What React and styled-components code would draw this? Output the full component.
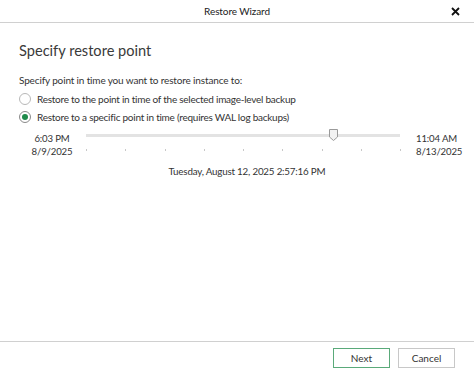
import React from "react";
import styled, { createGlobalStyle } from "styled-components";

const Global = createGlobalStyle`
  html, body { margin: 0; padding: 0; background: #fff; }
  body { font-family: "Lato", "Noto Sans", sans-serif; color: #333; }
  * { box-sizing: border-box; }
`;

const Window = styled.div`
  width: 474px;
  height: 374px;
  display: flex;
  flex-direction: column;
  background: #fff;
`;

const TitleBar = styled.div`
  height: 23px;
  flex: none;
  display: flex;
  align-items: center;
  justify-content: center;
  position: relative;
  border-bottom: 1px solid #d0d0d0;
  font-size: 10px;
  letter-spacing: -0.1px;
  color: #222;
`;

const Close = styled.div`
  position: absolute;
  right: 13px;
  top: 6px;
  width: 11px;
  height: 11px;
  display: flex;
`;

const Body = styled.div`
  flex: 1;
  padding: 18px 19px 0 19px;
  display: flex;
  flex-direction: column;
`;

const Heading = styled.div`
  font-size: 14.6px;
  color: #3a3a3a;
  line-height: 20px;
  margin-bottom: 12px;
`;

const Label = styled.div`
  font-size: 10px;
  letter-spacing: -0.15px;
  line-height: 14px;
  margin-bottom: 3px;
`;

const RadioRow = styled.div`
  display: flex;
  align-items: center;
  gap: 6px;
  height: 18px;
  font-size: 10px;
  letter-spacing: -0.25px;
`;

const RadioCircle = styled.span`
  width: 12px;
  height: 12px;
  flex: none;
  border-radius: 50%;
  border: 1px solid ${(p) => (p.$checked ? "#8a8a8a" : "#b8b8b8")};
  display: flex;
  align-items: center;
  justify-content: center;
  &::after {
    content: "";
    width: 6px;
    height: 6px;
    border-radius: 50%;
    background: ${(p) => (p.$checked ? "#1e8a4a" : "transparent")};
  }
`;

const SliderRow = styled.div`
  display: flex;
  align-items: flex-start;
  margin-top: 6px;
  height: 30px;
`;

const EdgeLabel = styled.div`
  width: ${(p) => p.$w}px;
  flex: none;
  white-space: nowrap;
  font-size: 9.6px;
  letter-spacing: -0.15px;
  line-height: 13px;
  text-align: ${(p) => p.$align};
  color: #333;
`;

const SliderArea = styled.div`
  flex: 1;
  position: relative;
  height: 30px;
  margin: 0 ${(p) => p.$mr}px 0 ${(p) => p.$ml}px;
`;

const Track = styled.div`
  position: absolute;
  left: 0;
  right: 0;
  top: 2px;
  height: 3px;
  background: #e3e3e3;
`;

const Tick = styled.div`
  position: absolute;
  top: 17px;
  width: 1px;
  height: 2px;
  background: #c8c8c8;
`;

const Thumb = styled.svg`
  position: absolute;
  top: -3px;
`;

const DateLine = styled.div`
  text-align: center;
  font-size: 9.8px;
  letter-spacing: -0.2px;
  margin-top: 3px;
  padding-left: 20px;
`;

const Footer = styled.div`
  flex: none;
  height: 33px;
  border-top: 1px solid #d0d0d0;
  display: flex;
  justify-content: flex-end;
  align-items: flex-start;
  padding: 6px 19px 0 0;
  gap: 8px;
`;

const Button = styled.button`
  width: 57px;
  height: 20px;
  background: #fff;
  border: 1px solid ${(p) => (p.$primary ? "#5aaa7a" : "#c8c8c8")};
  font-family: inherit;
  font-size: 10px;
  color: #333;
  padding: 0;
`;

const ticks = [0, 1, 2, 3, 4, 5, 6, 7, 8];

export default function App() {
  return (
    <Window>
      <Global />
      <TitleBar>
        Restore Wizard
        <Close>
          <svg width="11" height="11" viewBox="0 0 11 11">
            <path d="M2 2 L9 9 M9 2 L2 9" stroke="#111" strokeWidth="1.8" />
          </svg>
        </Close>
      </TitleBar>
      <Body>
        <Heading>Specify restore point</Heading>
        <Label>Specify point in time you want to restore instance to:</Label>
        <RadioRow>
          <RadioCircle />
          Restore to the point in time of the selected image-level backup
        </RadioRow>
        <RadioRow>
          <RadioCircle $checked />
          Restore to a specific point in time (requires WAL log backups)
        </RadioRow>
        <SliderRow>
          <EdgeLabel $w={66} $align="center">
            6:03 PM
            <br />
            8/9/2025
          </EdgeLabel>
          <SliderArea $ml={1} $mr={16}>
            <Track />
            {ticks.map((t) => (
              <Tick key={t} style={{ left: `${(t / 8) * 100}%` }} />
            ))}
            <Thumb width="9" height="12" viewBox="0 0 9 12" style={{ left: "77.5%" }}>
              <path d="M0.5 0.5 H8.5 V8 L4.5 11.5 L0.5 8 Z" fill="#f2f2f2" stroke="#9a9a9a" />
            </Thumb>
          </SliderArea>
          <EdgeLabel $w={39} $align="right">
            11:04 AM
            <br />
            8/13/2025
          </EdgeLabel>
        </SliderRow>
        <DateLine>Tuesday, August 12, 2025 2:57:16 PM</DateLine>
      </Body>
      <Footer>
        <Button $primary>Next</Button>
        <Button>Cancel</Button>
      </Footer>
    </Window>
  );
}
